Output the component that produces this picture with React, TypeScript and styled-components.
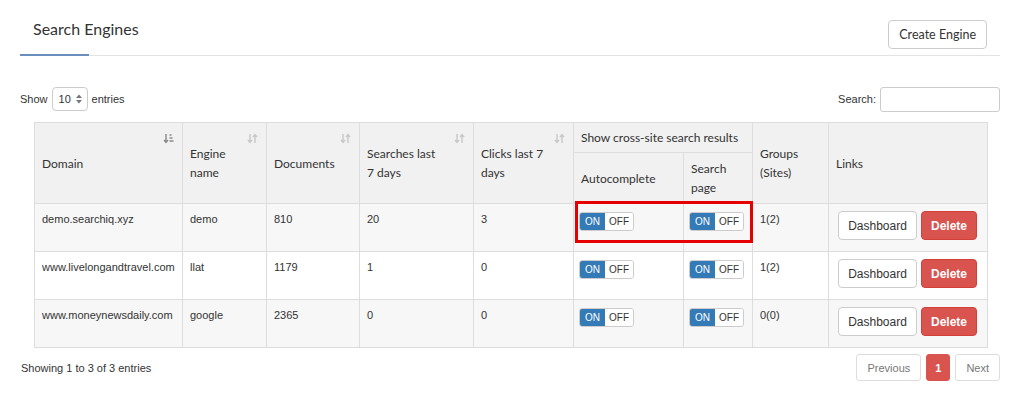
import styled, { createGlobalStyle } from 'styled-components';

// Styles globaux de la page
const GlobalStyle = createGlobalStyle`
  html, body {
    margin: 0;
    padding: 0;
    background: #ffffff;
  }
  body {
    font-family: "Liberation Sans", Arial, sans-serif;
    color: #333333;
  }
  * {
    box-sizing: border-box;
  }
`;

const Page = styled.div`
  width: 1024px;
  padding: 0 24px 0 20px;
`;

// En-tête avec onglet et bouton
const HeaderBar = styled.div`
  display: flex;
  align-items: flex-end;
  justify-content: space-between;
  padding-top: 19px;
  border-bottom: 1px solid #e3e3e3;
`;

const TitleTab = styled.div`
  position: relative;
  font-family: Lato, "Open Sans", sans-serif;
  font-size: 16px;
  line-height: 20px;
  color: #333;
  padding: 0 13px 16px;

  // Petit trait bleu sous le titre
  &::after {
    content: '';
    position: absolute;
    left: 0;
    bottom: -1px;
    width: 69px;
    height: 2px;
    background: #6a8fbd;
  }
`;

const OutlineButton = styled.button<{ $font?: string }>`
  font-family: ${(p) => p.$font || '"Liberation Sans", Arial, sans-serif'};
  font-size: 12px;
  color: #333;
  background: #fff;
  border: 1px solid #cccccc;
  border-radius: 4px;
  padding: 0 10px;
  height: 29px;
  cursor: pointer;
`;

const CreateButton = styled(OutlineButton)`
  margin: 0 13px 6px 0;
  height: 29px;
  padding: 0 10px;
  font-size: 12.5px;
`;

// Ligne de contrôles (nombre d'entrées, recherche)
const Controls = styled.div`
  display: flex;
  justify-content: space-between;
  align-items: center;
  margin-top: 31px;
  height: 24px;
  font-size: 11px;
`;

const ControlGroup = styled.label`
  display: flex;
  align-items: center;
  gap: 4px;
`;

const FakeSelect = styled.div`
  width: 36px;
  height: 24px;
  border: 1px solid #cccccc;
  border-radius: 4px;
  display: flex;
  align-items: center;
  justify-content: space-between;
  padding: 0 5px 0 6px;
  font-size: 11px;
`;

const SearchInput = styled.div`
  width: 120px;
  height: 25px;
  border: 1px solid #cccccc;
  border-radius: 3px;
  background: #fff;
`;

const TableWrap = styled.div`
  position: relative;
  margin: 11px 13px 0 14px;
`;

const Table = styled.table`
  width: 953px;
  border-collapse: collapse;
  table-layout: fixed;
  border: 1px solid #dddddd;
`;

const Th = styled.th`
  position: relative;
  background: #f1f1f1;
  border: 1px solid #dddddd;
  font-family: Lato, "Open Sans", sans-serif;
  font-weight: 400;
  font-size: 12px;
  line-height: 19px;
  color: #333;
  text-align: left;
  vertical-align: middle;
  padding: 0 8px 0 7px;
`;

const TopTh = styled(Th)`
  height: 30px;
  white-space: nowrap;
`;

const SubTh = styled(Th)`
  height: 51px;
`;

const SortIcon = styled.span`
  position: absolute;
  top: 10px;
  right: 8px;
  line-height: 0;
`;

const Tr = styled.tr<{ $striped: boolean }>`
  background: ${(p) => (p.$striped ? '#f7f7f7' : '#ffffff')};
`;

const Td = styled.td`
  height: 48px;
  border: 1px solid #dddddd;
  font-size: 11px;
  line-height: 15px;
  vertical-align: top;
  padding: 8px 7px;
  color: #333;
  white-space: nowrap;
  overflow: hidden;
`;

const LinksTd = styled(Td)`
  padding: 7px 9px;
`;

const LinkButtons = styled.div`
  display: flex;
  gap: 4px;
`;

const DashButton = styled(OutlineButton)`
  width: 79px;
  padding: 0;
`;

const DangerButton = styled.button`
  font-family: "Liberation Sans", Arial, sans-serif;
  font-size: 12px;
  font-weight: 700;
  color: #fff;
  background: #d9534f;
  border: 1px solid #d43f3a;
  border-radius: 4px;
  height: 29px;
  width: 56px;
  padding: 0;
`;

const Toggle = styled.div`
  display: inline-flex;
  height: 19px;
  border: 1px solid #cccccc;
  border-radius: 3px;
  overflow: hidden;
  font-size: 10px;
  margin-left: -2px;
`;

const ToggleSide = styled.span<{ $on: boolean }>`
  display: flex;
  align-items: center;
  justify-content: center;
  width: ${(p) => (p.$on ? '25px' : '28px')};
  background: ${(p) => (p.$on ? '#337ab7' : '#ffffff')};
  color: ${(p) => (p.$on ? '#ffffff' : '#333333')};
`;

const Highlight = styled.div`
  position: absolute;
  left: 541px;
  top: 79px;
  width: 178px;
  height: 42px;
  border: 3px solid #e60000;
  pointer-events: none;
`;

// Pied de tableau
const Footer = styled.div`
  display: flex;
  justify-content: space-between;
  align-items: center;
  margin-top: 6px;
  font-size: 11px;
`;

const Info = styled.div`
  padding-left: 1px;
`;

const Pagination = styled.div`
  display: flex;
  gap: 5px;
`;

const PageButton = styled.span<{ $active?: boolean }>`
  display: flex;
  align-items: center;
  justify-content: center;
  height: 27px;
  padding: 0 ${(p) => (p.$active ? '8px' : '10px')};
  border-radius: 3px;
  font-size: 11px;
  border: 1px solid ${(p) => (p.$active ? '#d9534f' : '#dddddd')};
  background: ${(p) => (p.$active ? '#d9534f' : '#ffffff')};
  color: ${(p) => (p.$active ? '#ffffff' : '#777777')};
  font-weight: ${(p) => (p.$active ? 700 : 400)};
`;

const SortBoth = () => (
  <svg width="11" height="11" viewBox="0 0 11 11" fill="none" stroke="#c8c8c8" strokeWidth="1.4">
    <path d="M3 1v8M1 7l2 2.5L5 7" />
    <path d="M8 10V2M6 4l2-2.5L10 4" />
  </svg>
);

const SortAsc = () => (
  <svg width="11" height="11" viewBox="0 0 11 11" fill="none" stroke="#8a8a8a" strokeWidth="1.4">
    <path d="M3 1v8M1 7l2 2.5L5 7" />
    <path d="M6.5 2h2M6.5 5h3M6.5 8h4" />
  </svg>
);

const SelectArrows = () => (
  <svg width="6" height="10" viewBox="0 0 6 10" fill="#777">
    <path d="M0 4L3 0.5 6 4z" />
    <path d="M0 6l3 3.5L6 6z" />
  </svg>
);

const OnOff = () => (
  <Toggle>
    <ToggleSide $on>ON</ToggleSide>
    <ToggleSide $on={false}>OFF</ToggleSide>
  </Toggle>
);

const columns = [148, 84, 93, 114, 100, 110, 69, 76, 159];

const rows = [
  { domain: 'demo.searchiq.xyz', name: 'demo', docs: '810', searches: '20', clicks: '3', groups: '1(2)' },
  { domain: 'www.livelongandtravel.com', name: 'llat', docs: '1179', searches: '1', clicks: '0', groups: '1(2)' },
  { domain: 'www.moneynewsdaily.com', name: 'google', docs: '2365', searches: '0', clicks: '0', groups: '0(0)' },
];

const App = () => {
  return (
    <Page>
      <GlobalStyle />
      <HeaderBar>
        <TitleTab>Search Engines</TitleTab>
        <CreateButton $font='Lato, "Open Sans", sans-serif'>Create Engine</CreateButton>
      </HeaderBar>

      <Controls>
        <ControlGroup>
          Show
          <FakeSelect>
            10
            <SelectArrows />
          </FakeSelect>
          entries
        </ControlGroup>
        <ControlGroup>
          Search:
          <SearchInput />
        </ControlGroup>
      </Controls>

      <TableWrap>
        <Table>
          <colgroup>
            {columns.map((w, i) => (
              <col key={i} style={{ width: w }} />
            ))}
          </colgroup>
          <thead>
            <tr>
              <TopTh rowSpan={2}>
                Domain
                <SortIcon><SortAsc /></SortIcon>
              </TopTh>
              <Th rowSpan={2}>
                Engine
                <br />
                name
                <SortIcon><SortBoth /></SortIcon>
              </Th>
              <TopTh rowSpan={2}>
                Documents
                <SortIcon><SortBoth /></SortIcon>
              </TopTh>
              <Th rowSpan={2}>
                Searches last
                <br />
                7 days
                <SortIcon><SortBoth /></SortIcon>
              </Th>
              <Th rowSpan={2}>
                Clicks last 7
                <br />
                days
                <SortIcon><SortBoth /></SortIcon>
              </Th>
              <TopTh colSpan={2}>Show cross-site search results</TopTh>
              <Th rowSpan={2}>
                Groups
                <br />
                (Sites)
              </Th>
              <TopTh rowSpan={2}>Links</TopTh>
            </tr>
            <tr>
              <SubTh>Autocomplete</SubTh>
              <SubTh>
                Search
                <br />
                page
              </SubTh>
            </tr>
          </thead>
          <tbody>
            {rows.map((r, i) => (
              <Tr key={r.domain} $striped={i % 2 === 0}>
                <Td>{r.domain}</Td>
                <Td>{r.name}</Td>
                <Td>{r.docs}</Td>
                <Td>{r.searches}</Td>
                <Td>{r.clicks}</Td>
                <Td><OnOff /></Td>
                <Td><OnOff /></Td>
                <Td>{r.groups}</Td>
                <LinksTd>
                  <LinkButtons>
                    <DashButton>Dashboard</DashButton>
                    <DangerButton>Delete</DangerButton>
                  </LinkButtons>
                </LinksTd>
              </Tr>
            ))}
          </tbody>
        </Table>
        <Highlight />
      </TableWrap>

      <Footer>
        <Info>Showing 1 to 3 of 3 entries</Info>
        <Pagination>
          <PageButton>Previous</PageButton>
          <PageButton $active>1</PageButton>
          <PageButton>Next</PageButton>
        </Pagination>
      </Footer>
    </Page>
  );
};

export default App;
